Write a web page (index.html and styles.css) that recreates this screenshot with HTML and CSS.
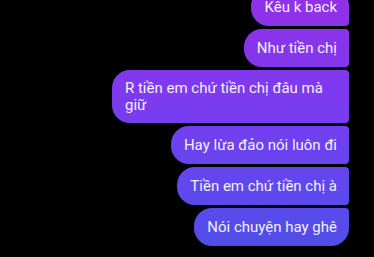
FILE: index.html
```html
<!DOCTYPE html>
<html lang="vi">
<head>
    <meta charset="UTF-8">
    <meta name="viewport" content="width=device-width, initial-scale=1.0">
    <title>Messages</title>
    <link rel="stylesheet" href="styles.css">
</head>
<body>

    <div class="chat">
        <div class="bubble first">Kêu k back</div>
        <div class="bubble">Như tiền chị</div>
        <div class="bubble">R tiền em chứ tiền chị đâu mà giữ</div>
        <div class="bubble">Hay lừa đảo nói luôn đi</div>
        <div class="bubble">Tiền em chứ tiền chị à</div>
        <div class="bubble last">Nói chuyện hay ghê</div>
    </div>

</body>
</html>
```

FILE: styles.css
```css
* {
    box-sizing: border-box;
    margin: 0;
    padding: 0;
}

body {
    font-family: Roboto, "Noto Sans", sans-serif;
    background-color: #000;
    height: 257px;
    overflow: hidden;
}

.chat {
    display: flex;
    flex-direction: column;
    align-items: flex-end;
    gap: 3px;
    padding-right: 25px;
    margin-top: -12px;
}

.bubble {
    display: flex;
    align-items: center;
    min-height: 38px;
    max-width: 237px;
    padding: 9.5px 12px 9.5px 13px;
    font-size: 15px;
    line-height: 17px;
    color: #f3f0fc;
    border-radius: 18px 4px 4px 18px;
    background: linear-gradient(to bottom, #9130e8 0px, #7a3cf0 110px, #5f48ee 190px, #4c4fe6 257px);
    background-attachment: fixed;
}

.bubble.first {
    border-top-right-radius: 18px;
}

.bubble.last {
    border-bottom-right-radius: 18px;
}
```
